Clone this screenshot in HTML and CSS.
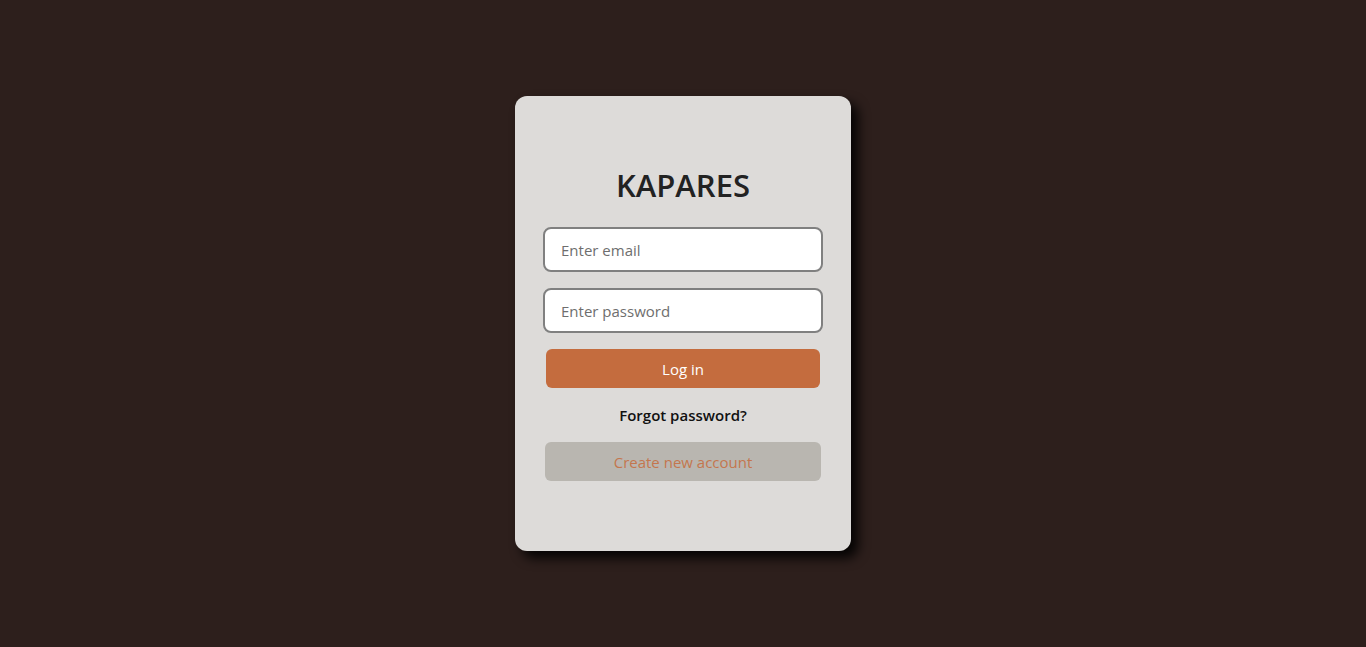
FILE: index.html
```html
<!DOCTYPE html>
<html lang="en">
<head>
  <meta charset="UTF-8">
  <meta name="viewport" content="width=device-width, initial-scale=1.0">
  <title>Kapares - Log in</title>
  <link rel="stylesheet" href="styles.css">
</head>
<body>
  <div class="login-card">
    <h1 class="brand">KAPARES</h1>
    <form class="login-form">
      <input type="email" class="field" placeholder="Enter email">
      <input type="password" class="field" placeholder="Enter password">
      <button type="submit" class="btn-login">Log in</button>
    </form>
    <a href="#" class="forgot">Forgot password?</a>
    <button type="button" class="btn-create">Create new account</button>
  </div>
</body>
</html>
```

FILE: styles.css
```css
body {
  font-family: 'Open Sans', 'Noto Sans', sans-serif;
  background: #2d1f1c;
  margin: 0;
  padding: 96px 0;
  display: flex;
  justify-content: center;
}
.login-card {
  background: #dddbd9;
  width: 336px;
  height: 455px;
  box-sizing: border-box;
  padding: 68px 28px 0;
  border-radius: 12px;
  box-shadow: 7px 7px 12px rgba(0, 0, 0, 0.9);
  display: flex;
  flex-direction: column;
  align-items: center;
}
.brand {
  margin: 0 0 21px;
  font-size: 31px;
  font-weight: 600;
  line-height: 42px;
  color: #222;
}
.login-form {
  width: 100%;
  display: flex;
  flex-direction: column;
  align-items: center;
  gap: 16px;
}
.field {
  width: 100%;
  height: 45px;
  box-sizing: border-box;
  padding: 0 16px;
  border: 2px solid #808080;
  border-radius: 8px;
  background: #fff;
  font-family: inherit;
  font-size: 15px;
  color: #222;
  outline: none;
}
.field::placeholder {
  color: #6e6e6e;
}
.btn-login {
  width: 274px;
  height: 39px;
  border: none;
  border-radius: 6px;
  background: #c46c3e;
  color: #fff;
  font-family: inherit;
  font-size: 15px;
  cursor: pointer;
}
.forgot {
  margin: 16px 0 16px;
  font-size: 15px;
  font-weight: 600;
  line-height: 22px;
  color: #111;
  text-decoration: none;
}
.btn-create {
  width: 276px;
  height: 39px;
  border: none;
  border-radius: 6px;
  background: #b9b6b0;
  color: #c4764e;
  font-family: inherit;
  font-size: 15px;
  cursor: pointer;
}
```
